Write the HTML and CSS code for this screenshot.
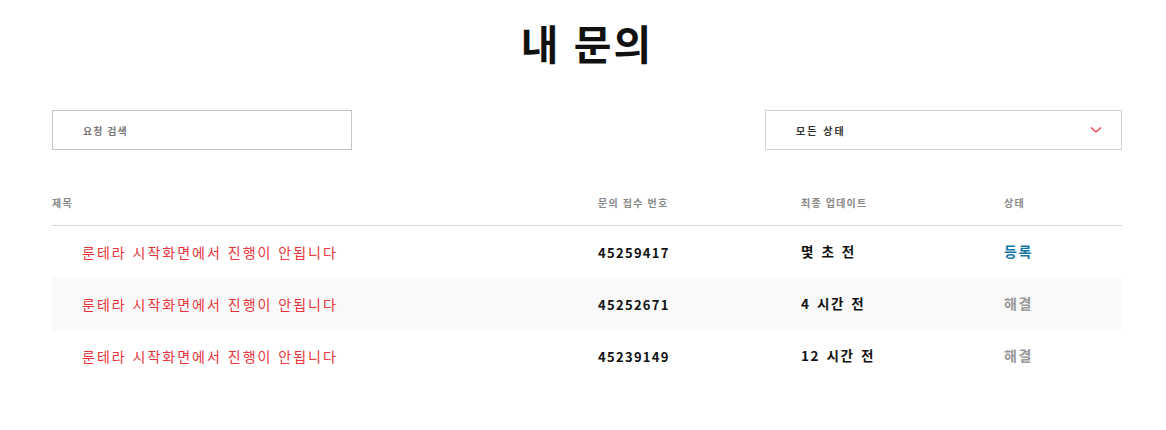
FILE: index.html
```html
<!DOCTYPE html>
<html lang="ko">
<head>
    <meta charset="UTF-8">
    <title>내 문의</title>
    <link rel="stylesheet" href="styles.css">
</head>
<body>
    <div class="page">
        <h1 class="page-title">내 문의</h1>

        <div class="filters">
            <div class="search-box">
                <input type="text" class="search-input" placeholder="요청 검색">
            </div>
            <div class="status-select">
                <span>모든 상태</span>
                <svg class="chevron" width="12" height="8" viewBox="0 0 12 8">
                    <polyline points="1,1.5 6,6 11,1.5" fill="none" stroke="#e8333b" stroke-width="1.2"/>
                </svg>
            </div>
        </div>

        <div class="requests">
            <div class="row head">
                <div class="col-title">제목</div>
                <div class="col-id">문의 접수 번호</div>
                <div class="col-updated">최종 업데이트</div>
                <div class="col-status">상태</div>
            </div>
            <div class="row">
                <div class="col-title"><a href="#">룬테라 시작화면에서 진행이 안됩니다</a></div>
                <div class="col-id">45259417</div>
                <div class="col-updated">몇 초 전</div>
                <div class="col-status open">등록</div>
            </div>
            <div class="row alt">
                <div class="col-title"><a href="#">룬테라 시작화면에서 진행이 안됩니다</a></div>
                <div class="col-id">45252671</div>
                <div class="col-updated">4 시간 전</div>
                <div class="col-status solved">해결</div>
            </div>
            <div class="row">
                <div class="col-title"><a href="#">룬테라 시작화면에서 진행이 안됩니다</a></div>
                <div class="col-id">45239149</div>
                <div class="col-updated">12 시간 전</div>
                <div class="col-status solved">해결</div>
            </div>
        </div>
    </div>
</body>
</html>
```

FILE: styles.css
```css
* {
    box-sizing: border-box;
}
body {
    margin: 0;
    background: #fff;
    color: #111;
    font-family: "Noto Sans CJK KR", "Noto Sans", sans-serif;
}
.page {
    width: 1070px;
    margin: 0 44px 0 52px;
    padding-top: 14px;
}
.page-title {
    margin: 0;
    text-align: center;
    font-size: 41px;
    font-weight: 700;
    line-height: 56px;
    letter-spacing: 2px;
    color: #111;
}
.filters {
    display: flex;
    justify-content: space-between;
    margin-top: 40px;
}
.search-box {
    width: 300px;
    height: 40px;
    border: 1px solid #bfc5cc;
}
.search-input {
    width: 100%;
    height: 100%;
    border: none;
    outline: none;
    padding: 0 30px;
    font-family: inherit;
    font-size: 10px;
    font-weight: 700;
    letter-spacing: 1px;
    background: transparent;
}
.search-input::placeholder {
    color: #7a7a7a;
}
.status-select {
    width: 357px;
    height: 40px;
    border: 1px solid #d2d2d2;
    display: flex;
    align-items: center;
    justify-content: space-between;
    padding: 0 19px 0 30px;
    font-size: 10px;
    font-weight: 700;
    letter-spacing: 2px;
    color: #333;
}
.requests {
    margin-top: 40px;
}
.row {
    display: flex;
    align-items: center;
    height: 52px;
    padding-bottom: 3px;
}
.row.alt {
    background: #f9f9f9;
}
.row.head {
    height: 36px;
    padding: 5px 0 0;
    align-items: flex-start;
    border-bottom: 1px solid #d4d4d4;
    font-size: 10px;
    font-weight: 700;
    color: #888;
    letter-spacing: 1.2px;
}
.col-title {
    width: 546px;
    flex-shrink: 0;
}
.col-id,
.col-updated {
    width: 203px;
    flex-shrink: 0;
}
.col-status {
    flex: 1;
}
.row:not(.head) .col-title {
    padding-left: 30px;
}
.col-title a {
    color: #e8333b;
    text-decoration: none;
    font-size: 14px;
    letter-spacing: 2px;
}
.row:not(.head) .col-id {
    padding-top: 4px;
    font-size: 13px;
    font-weight: 700;
    letter-spacing: 1.3px;
}
.row:not(.head) .col-updated {
    font-size: 13.5px;
    font-weight: 700;
    letter-spacing: 1.6px;
    word-spacing: 1px;
}
.row:not(.head) .col-status {
    font-size: 14px;
    font-weight: 700;
    letter-spacing: 1.5px;
}
.open {
    color: #1377a6;
}
.solved {
    color: #999;
}
```
